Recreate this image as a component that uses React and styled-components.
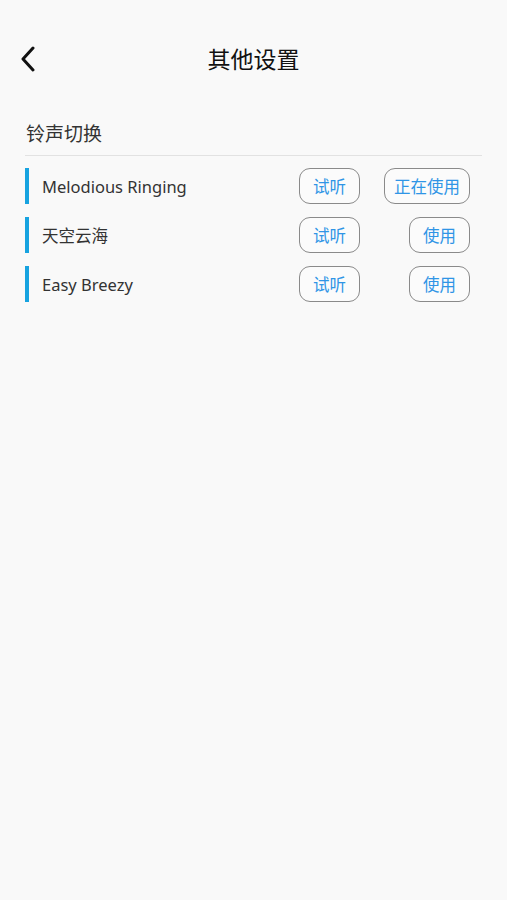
import React from "react";
import styled, { createGlobalStyle } from "styled-components";

const Global = createGlobalStyle`
  html, body { margin: 0; padding: 0; background: #f9f9f9; }
  body { font-family: "Noto Sans", "Noto Sans CJK SC", sans-serif; }
`;

const Page = styled.div`
  width: 507px;
  min-height: 900px;
  background: #f9f9f9;
  display: flex;
  flex-direction: column;
`;

const Header = styled.header`
  height: 60px;
  margin-top: 28px;
  display: flex;
  align-items: center;
  justify-content: center;
  position: relative;
`;

const Back = styled.button`
  position: absolute;
  left: 16px;
  top: calc(50% + 1px);
  transform: translateY(-50%);
  border: 0;
  background: transparent;
  padding: 0;
  width: 24px;
  height: 28px;
  display: flex;
  align-items: center;
  justify-content: center;
`;

const Title = styled.h1`
  margin: 0;
  font-size: 23px;
  font-weight: 400;
  color: #111;
  font-family: "Noto Sans CJK SC", sans-serif;
`;

const Section = styled.section`
  padding: 0 25px;
  display: flex;
  flex-direction: column;
`;

const SectionTitle = styled.div`
  font-family: "Noto Sans CJK SC", sans-serif;
  font-size: 19px;
  color: #333;
  padding: 0 1px 1px;
  height: 46px;
  box-sizing: border-box;
  display: flex;
  align-items: center;
  margin-top: 22px;
  border-bottom: 1.5px solid #e2e2e2;
  width: 457px;
`;

const List = styled.div`
  display: flex;
  flex-direction: column;
  gap: 13px;
  margin-top: 12px;
`;

const Row = styled.div`
  height: 36px;
  display: flex;
  align-items: center;
  border-left: 4px solid #17a3e0;
  padding-left: 13px;
  padding-right: 12px;
`;

const Name = styled.div`
  flex: 1;
  font-size: 16.5px;
  color: #333;
  font-family: "Noto Sans", "Noto Sans CJK SC", sans-serif;
`;

const Actions = styled.div`
  display: grid;
  grid-template-columns: 61px 110px;
  justify-items: end;
`;

const Btn = styled.button`
  height: 36px;
  width: ${(p) => p.$w || 61}px;
  box-sizing: border-box;
  border: 1.5px solid #8a8a8a;
  border-radius: 11px;
  background: #fbfbfb;
  color: #2f95e6;
  font-family: "Noto Sans CJK SC", sans-serif;
  font-size: 16.5px;
  padding: 0;
  display: flex;
  align-items: center;
  justify-content: center;
`;

const rings = [
  { name: "Melodious Ringing", active: true },
  { name: "天空云海", active: false },
  { name: "Easy Breezy", active: false },
];

export default function App() {
  return (
    <Page>
      <Global />
      <Header>
        <Back aria-label="back">
          <svg width="16" height="26" viewBox="0 0 16 26">
            <path d="M13 2 L3 13 L13 24" fill="none" stroke="#111" strokeWidth="3" strokeLinecap="round" strokeLinejoin="round" />
          </svg>
        </Back>
        <Title>其他设置</Title>
      </Header>
      <Section>
        <SectionTitle>铃声切换</SectionTitle>
        <List>
          {rings.map((r) => (
            <Row key={r.name}>
              <Name>{r.name}</Name>
              <Actions>
                <Btn>试听</Btn>
                <Btn $w={r.active ? 86 : 61}>{r.active ? "正在使用" : "使用"}</Btn>
              </Actions>
            </Row>
          ))}
        </List>
      </Section>
    </Page>
  );
}
